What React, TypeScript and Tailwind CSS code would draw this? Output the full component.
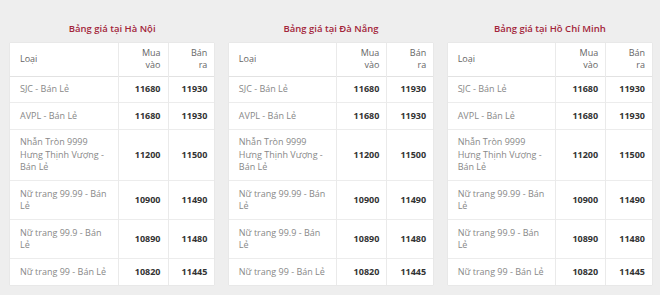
import React from "react";

type Row = { name: React.ReactNode; buy: string; sell: string };

const rows: Row[] = [
  { name: "SJC - Bán Lẻ", buy: "11680", sell: "11930" },
  { name: "AVPL - Bán Lẻ", buy: "11680", sell: "11930" },
  {
    name: (
      <>
        Nhẫn Tròn 9999
        <br />
        Hưng Thịnh Vượng -
        <br />
        Bán Lẻ
      </>
    ),
    buy: "11200",
    sell: "11500",
  },
  {
    name: (
      <>
        Nữ trang 99.99 - Bán
        <br />
        Lẻ
      </>
    ),
    buy: "10900",
    sell: "11490",
  },
  {
    name: (
      <>
        Nữ trang 99.9 - Bán
        <br />
        Lẻ
      </>
    ),
    buy: "10890",
    sell: "11480",
  },
  { name: "Nữ trang 99 - Bán Lẻ", buy: "10820", sell: "11445" },
];

const cities = ["Hà Nội", "Đà Nẵng", "Hồ Chí Minh"];

const PriceTable: React.FC<{ city: string }> = ({ city }) => {
  return (
    <div>
      <div className="pt-[22px] mb-[7px] text-center text-[9.5px] leading-[14px] font-semibold text-[#a3253a]">
        Bảng giá tại {city}
      </div>
      <table className="w-full bg-white border-collapse table-fixed text-[9px] leading-[12.5px] shadow-[0_0_1px_rgba(0,0,0,0.15)]">
        <colgroup>
          <col className="w-[108px]" />
          <col className="w-[50px]" />
          <col />
        </colgroup>
        <thead>
          <tr className="h-[33px] border-b border-[#e2e2e2] text-[#666]">
            <th className="p-0 pl-[10px] text-left font-normal border-r border-[#eaeaea]">Loại</th>
            <th className="p-0 pr-[7px] text-right font-normal border-r border-[#eaeaea]">
              Mua
              <br />
              vào
            </th>
            <th className="p-0 pr-[7px] text-right font-normal">
              Bán
              <br />
              ra
            </th>
          </tr>
        </thead>
        <tbody>
          {rows.map((r, i) => (
            <tr key={i} className="border-b border-[#ececec] last:border-b-0">
              <td className="pl-[10px] py-[6.5px] text-[#888] border-r border-[#eaeaea] whitespace-nowrap">
                {r.name}
              </td>
              <td className="p-0 pr-[7px] text-right font-bold text-[#333] border-r border-[#eaeaea]">
                {r.buy}
              </td>
              <td className="p-0 pr-[7px] text-right font-bold text-[#333]">{r.sell}</td>
            </tr>
          ))}
        </tbody>
      </table>
    </div>
  );
};

export default function App() {
  return (
    <div
      className="w-[660px] h-[295px] bg-[#eeeeee] pl-[10px] pr-[8px] grid grid-cols-3 gap-[14.5px] overflow-hidden"
      style={{ fontFamily: '"Open Sans", "Noto Sans", sans-serif' }}
    >
      {cities.map((c) => (
        <PriceTable key={c} city={c} />
      ))}
    </div>
  );
}
